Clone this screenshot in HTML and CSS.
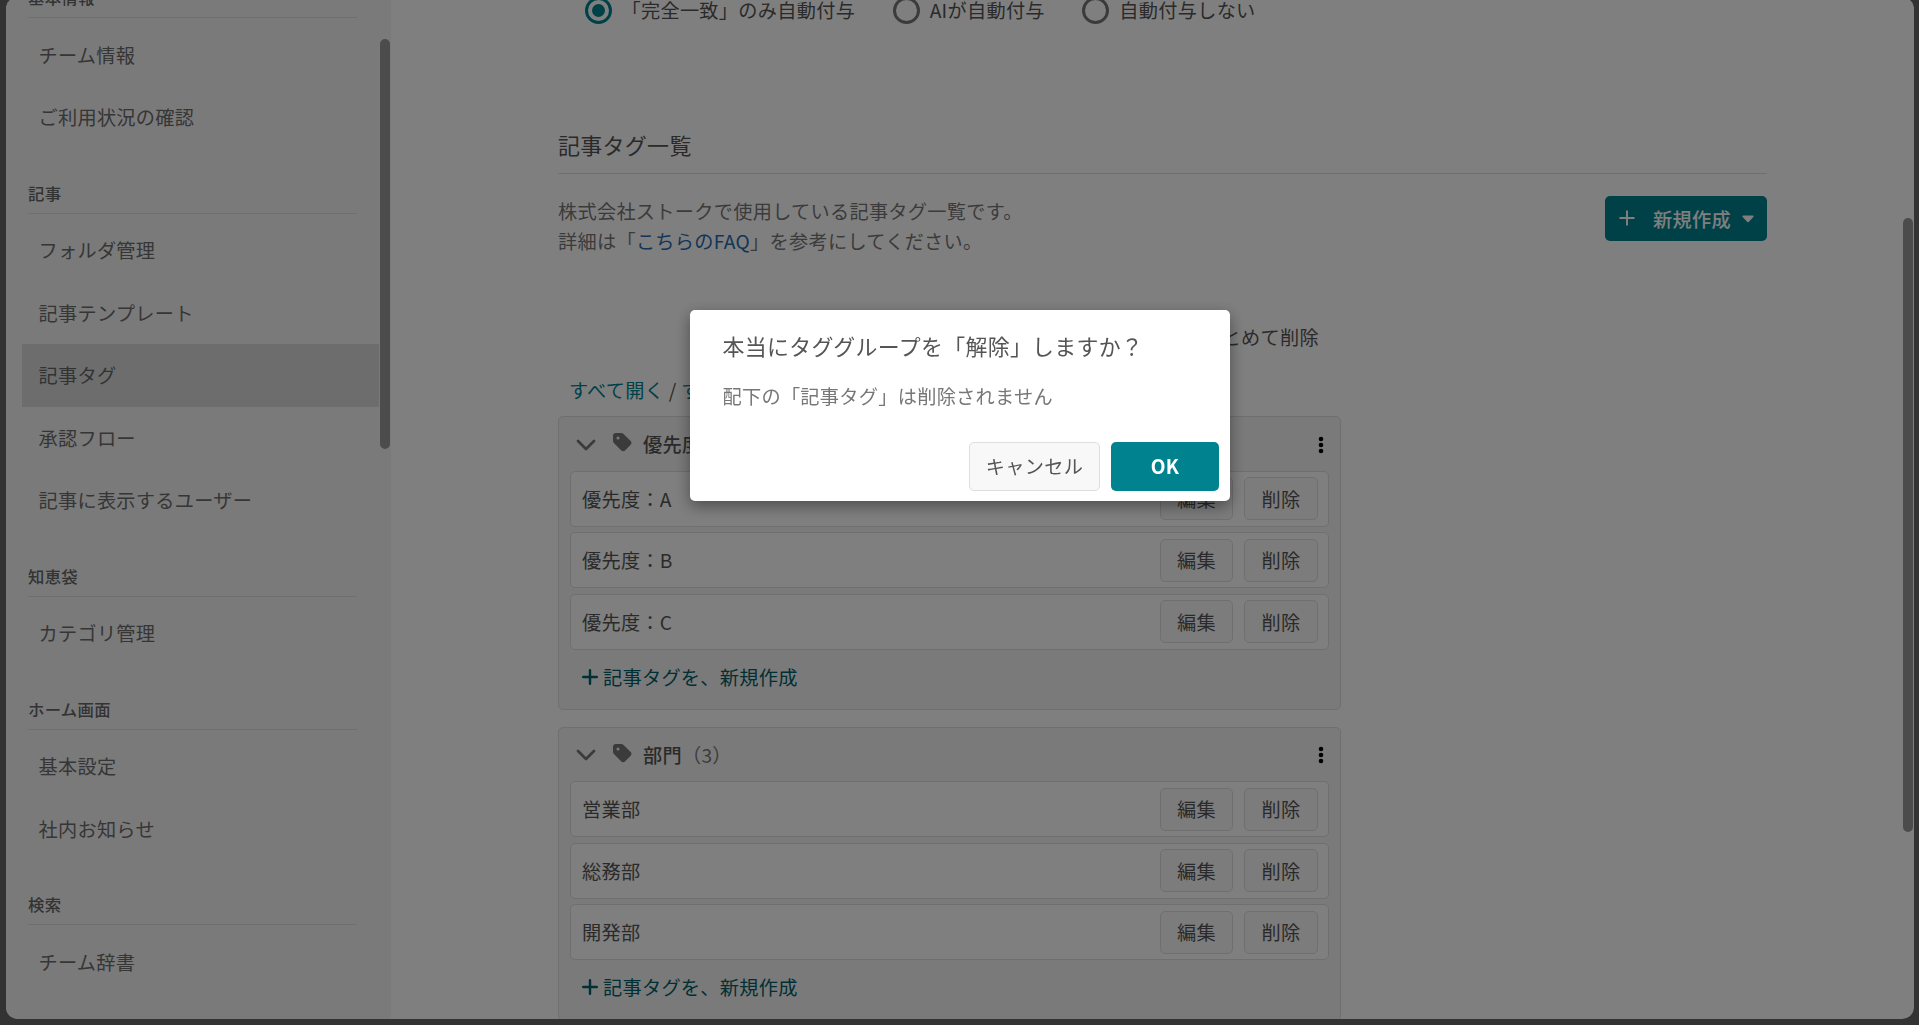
FILE: index.html
```html
<!DOCTYPE html>
<html lang="ja">
<head>
    <meta charset="UTF-8">
    <meta name="viewport" content="width=device-width, initial-scale=1.0">
    <title>記事タグ</title>
    <link rel="stylesheet" href="styles.css">
</head>
<body>
    <svg class="defs">
      <symbol id="chevron" viewBox="0 0 20 12">
        <path d="M2 2l8 8 8-8" fill="none" stroke="currentColor" stroke-width="2.8" stroke-linecap="round" stroke-linejoin="round"/>
      </symbol>
      <symbol id="tag" viewBox="0 0 19 19">
        <path fill="currentColor" fill-rule="evenodd" d="M0 2.6V8c0 .8.3 1.5.9 2.1l7.4 7.4c1 1 2.7 1 3.7 0l5.7-5.7c1-1 1-2.7 0-3.7L10.3.8C9.7.3 9 0 8.2 0H2.6C1.2 0 0 1.2 0 2.6zM5 3.400a1.500 1.500 0 1 1 0 3 1.500 1.500 0 0 1 0-3z"/>
      </symbol>
      <symbol id="plus" viewBox="0 0 16 16">
        <path d="M8 1.2v13.600M1.2 8h13.600" fill="none" stroke="currentColor" stroke-linecap="round"/>
      </symbol>
      <symbol id="caret" viewBox="0 0 12 8">
        <path d="M1.300 1.300h9.400L6 6.300z" fill="currentColor" stroke="currentColor" stroke-width="1.800" stroke-linejoin="round"/>
      </symbol>
      <symbol id="dots" viewBox="0 0 6 18">
        <circle cx="3" cy="3" r="2.3"/>
        <circle cx="3" cy="9" r="2.3"/>
        <circle cx="3" cy="15" r="2.3"/>
      </symbol>
    </svg>

    <div class="window">
      <aside class="sidebar">
        <nav>
          <section>
            <h3>基本情報</h3>
            <a>チーム情報</a>
            <a>ご利用状況の確認</a>
          </section>
          <section>
            <h3>記事</h3>
            <a>フォルダ管理</a>
            <a>記事テンプレート</a>
            <a class="active">記事タグ</a>
            <a>承認フロー</a>
            <a>記事に表示するユーザー</a>
          </section>
          <section>
            <h3>知恵袋</h3>
            <a>カテゴリ管理</a>
          </section>
          <section>
            <h3>ホーム画面</h3>
            <a>基本設定</a>
            <a>社内お知らせ</a>
          </section>
          <section>
            <h3>検索</h3>
            <a>チーム辞書</a>
          </section>
        </nav>
        <div class="scrollbar"></div>
      </aside>

      <main>
        <div class="radios">
          <label class="checked"><i></i>「完全一致」のみ自動付与</label>
          <label><i></i>AIが自動付与</label>
          <label><i></i>自動付与しない</label>
        </div>

        <h2>記事タグ一覧</h2>

        <div class="intro">
          <p>株式会社ストークで使用している記事タグ一覧です。<br>詳細は「<a>こちらのFAQ</a>」を参考にしてください。</p>
          <button class="create">
            <svg class="plus"><use href="#plus"/></svg>
            <span>新規作成</span>
            <svg class="caret"><use href="#caret"/></svg>
          </button>
        </div>

        <div class="list">
          <div class="bulk">まとめて削除</div>
          <div class="toggle"><a>すべて開く</a> / <a>すべて閉じる</a></div>

          <div class="group">
            <header>
              <svg class="chevron"><use href="#chevron"/></svg>
              <svg class="tag"><use href="#tag"/></svg>
              <b>優先度</b><span>（3）</span>
              <svg class="dots"><use href="#dots"/></svg>
            </header>
            <div class="rows">
              <div class="row"><span>優先度：A</span><button>編集</button><button>削除</button></div>
              <div class="row"><span>優先度：B</span><button>編集</button><button>削除</button></div>
              <div class="row"><span>優先度：C</span><button>編集</button><button>削除</button></div>
            </div>
            <a class="add"><svg class="plus"><use href="#plus"/></svg>記事タグを、新規作成</a>
          </div>

          <div class="group">
            <header>
              <svg class="chevron"><use href="#chevron"/></svg>
              <svg class="tag"><use href="#tag"/></svg>
              <b>部門</b><span>（3）</span>
              <svg class="dots"><use href="#dots"/></svg>
            </header>
            <div class="rows">
              <div class="row"><span>営業部</span><button>編集</button><button>削除</button></div>
              <div class="row"><span>総務部</span><button>編集</button><button>削除</button></div>
              <div class="row"><span>開発部</span><button>編集</button><button>削除</button></div>
            </div>
            <a class="add"><svg class="plus"><use href="#plus"/></svg>記事タグを、新規作成</a>
          </div>
        </div>
        <div class="scrollbar"></div>
      </main>
    </div>

    <div class="overlay">
      <div class="dialog">
        <h1>本当にタググループを「解除」しますか？</h1>
        <p>配下の「記事タグ」は削除されません</p>
        <div class="actions">
          <button>キャンセル</button>
          <button class="ok">OK</button>
        </div>
      </div>
    </div>
</body>
</html>
```

FILE: styles.css
```css
* {
  box-sizing: border-box;
}

:root {
  --primary: #00838f;
  --primary-dark: #006069;
  --text: #555;
  --muted: #777;
  --gray: #f5f5f5;
  --border: #dedede;
}

html {
  height: 100%;
  overflow: hidden;
}

body {
  height: 100%;
  margin: 0;
  overflow: hidden;
  background-color: #666;
  color: var(--text);
  font-family: "Noto Sans CJK JP", sans-serif;
  font-size: 19.2px;
  letter-spacing: 0.28px;
  line-height: 30px;
}

h1, h2, h3, p {
  margin: 0;
  font-weight: normal;
}

button {
  font: inherit;
  letter-spacing: inherit;
  color: inherit;
  padding: 0;
  background-color: #f8f8f8;
  border: 1px solid var(--border);
  border-radius: 5px;
}

.defs {
  display: none;
}

.window {
  display: flex;
  height: 1022px;
  margin: -3px 5px 0 6px;
  overflow: hidden;
  background-color: #fff;
  border-radius: 12px;
}

.scrollbar {
  position: absolute;
  width: 10px;
  border-radius: 5px;
  background-color: #999;
}

/* sidebar */

.sidebar {
  position: relative;
  flex: none;
  width: 385px;
  padding: 0 12px 0 16px;
  background-color: var(--gray);

  & nav {
    margin-top: -19px;
  }

  & section {
    margin-bottom: 25px;
  }

  & h3 {
    height: 40px;
    margin: 0 22px 5.6px 6px;
    border-bottom: 1px solid var(--border);
    font-size: 16.4px;
    font-weight: 500;
    line-height: 39px;
    color: #666;
  }

  & a {
    display: block;
    height: 62.5px;
    padding-left: 16.5px;
    line-height: 63px;
    color: #6c6c6c;
  }

  & .active {
    background-color: #dbdbdb;
    color: #666;
  }

  & .scrollbar {
    top: 42px;
    right: 1px;
    height: 410px;
  }
}

/* main */

main {
  position: relative;
  flex: 1;
  padding: 0 147px 0 167px;

  & > .scrollbar {
    top: 221px;
    right: 1px;
    height: 614px;
  }
}

.radios {
  display: flex;
  gap: 37.5px;
  height: 27px;
  padding-left: 26.5px;
  line-height: 26px;

  & label {
    display: flex;
    align-items: flex-start;
    gap: 10px;
  }

  & i {
    display: grid;
    place-content: center;
    width: 27px;
    height: 27px;
    border: 3px solid var(--muted);
    border-radius: 50%;
  }

  & .checked i {
    border-color: var(--primary);
  }

  & .checked i::before {
    content: "";
    width: 13px;
    height: 13px;
    border-radius: 50%;
    background-color: var(--primary);
  }
}

h2 {
  height: 56px;
  margin-top: 94px;
  border-bottom: 1px solid var(--border);
  font-size: 22px;
  line-height: 52px;
}

.intro {
  display: flex;
  justify-content: space-between;
  align-items: flex-start;
  height: 142px;
  padding-top: 22px;
  color: var(--muted);

  & a {
    color: #246cae;
  }
}

.create {
  display: flex;
  align-items: center;
  width: 162px;
  height: 45px;
  padding: 0 0 2px 14px;
  background-color: var(--primary);
  border: none;
  color: #fff;
  font-weight: 500;

  & span {
    margin: 2px 11px 0 18px;
  }
}

.plus {
  width: 16px;
  height: 16px;
  stroke-width: 2;
}

.caret {
  width: 12px;
  height: 8px;
  margin-top: 3px;
}

.list {
  width: 783px;
}

.bulk {
  padding-right: 22px;
  margin-top: 6px;
  text-align: right;
}

.toggle {
  margin: 23px 0 11px 11px;

  & a {
    color: var(--primary);
  }
}

.group {
  height: 294px;
  margin-bottom: 16.6px;
  padding: 0 11px;
  background-color: var(--gray);
  border: 1px solid var(--border);
  border-radius: 5px;

  & header {
    display: flex;
    align-items: center;
    height: 53.8px;
    padding: 2px 5px 0 6px;
    color: var(--muted);
  }

  & header b,
  & header span {
    margin-top: -1px;
  }

  & b {
    font-weight: 500;
    color: var(--text);
  }
}

.chevron {
  width: 20px;
  height: 12px;
  margin-right: 17px;
}

.tag {
  width: 19px;
  height: 19px;
  margin: 0 11px 4px 0;
}

.dots {
  width: 6px;
  height: 18px;
  margin-left: auto;
  color: #000;
}

.rows {
  display: grid;
  gap: 5.5px;
}

.row {
  display: flex;
  align-items: center;
  gap: 11px;
  height: 56px;
  padding: 0 10px 0 11px;
  background-color: #fff;
  border: 1px solid var(--border);
  border-radius: 5px;

  & span {
    flex: 1;
  }

  & button {
    width: 73px;
    height: 43px;
  }

  & button:last-child {
    width: 74px;
  }
}

.add {
  display: flex;
  align-items: center;
  gap: 5px;
  margin: 12px 0 0 12px;
  color: var(--primary-dark);

  & .plus {
    stroke-width: 2.4;
  }
}

/* dialog */

.overlay {
  position: fixed;
  inset: 0;
  display: flex;
  justify-content: center;
  align-items: flex-start;
  padding-top: 310px;
  background-color: rgba(0, 0, 0, 0.5);
}

.dialog {
  width: 540px;
  height: 191px;
  padding: 21px 11px 10px 33px;
  background-color: #fff;
  border-radius: 5px;
  box-shadow: 0 5px 16px rgba(0, 0, 0, 0.4);

  & h1 {
    font-size: 21.9px;
    letter-spacing: 0.35px;
  }

  & p {
    margin-top: 20px;
    color: var(--muted);
  }
}

.actions {
  display: flex;
  justify-content: flex-end;
  gap: 11px;
  margin-top: 31px;

  & button {
    width: 131px;
    height: 49px;
    padding: 0 0 2px 1px;
  }

  & .ok {
    width: 108px;
    background-color: var(--primary);
    border: none;
    color: #fff;
    font-weight: bold;
  }
}
```
